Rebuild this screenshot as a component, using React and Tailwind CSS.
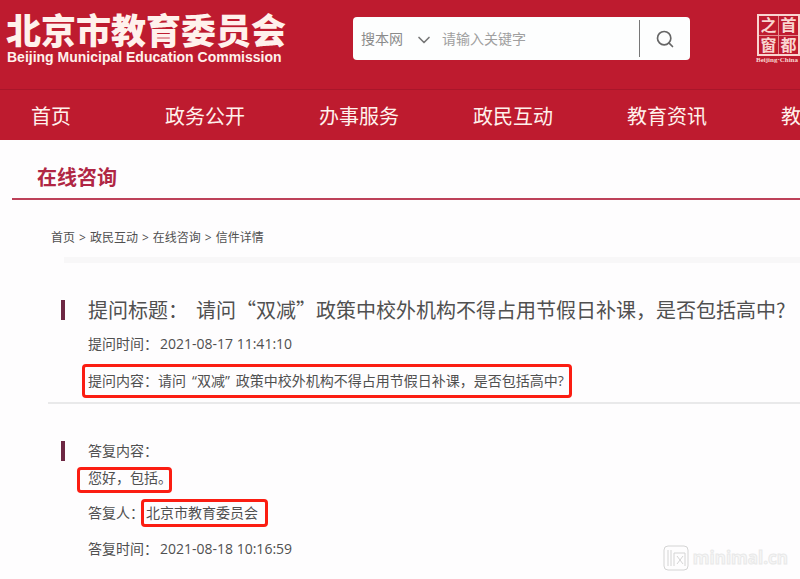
import React from "react";
import { ChevronDown, Search } from "lucide-react";

const NAV = ["政务公开", "办事服务", "政民互动", "教育资讯", "教育服务"];
const CRUMBS = ["首页", "政民互动", "在线咨询", "信件详情"];

function Seal() {
  return (
    <div className="flex w-[48px] shrink-0 flex-col items-start text-[#f9d5d0]">
      <div className="ml-px grid h-[42px] w-[43px] grid-cols-2 grid-rows-2 gap-px border-2 border-current bg-[#e58a8c] text-center text-[16px] leading-[18px] font-bold">
        {["之", "首", "窗", "都"].map((c) => (
          <span key={c} className="bg-[#be1b2f]">{c}</span>
        ))}
      </div>
      <span className="font-['Liberation_Serif',serif] text-[7px] leading-2 font-bold whitespace-nowrap">
        Beijing·China
      </span>
    </div>
  );
}

function Header() {
  return (
    <header className="bg-[#be1b2f] text-[#fff1ec]">
      <div className="flex h-[89px] items-start overflow-hidden pt-[13px]">
        <div className="w-[346px] shrink-0 pl-[6px] whitespace-nowrap">
          <div className="text-[35px] leading-9 font-black">北京市教育委员会</div>
          <div className="pl-px font-['Liberation_Sans',sans-serif] text-[14px] leading-4 font-bold">
            Beijing Municipal Education Commission
          </div>
        </div>
        <form
          className="mt-1 ml-[7px] flex h-[43px] w-[337px] shrink-0 items-center rounded bg-[#fdfefe] text-[14px] text-[#8b8b8b]"
          onSubmit={(e) => e.preventDefault()}
        >
          <div className="relative w-[81px]">
            <select aria-label="搜索范围" className="w-full appearance-none bg-transparent pl-2 outline-none">
              <option>搜本网</option>
            </select>
            <ChevronDown className="pointer-events-none absolute top-0.5 right-0 h-5 w-5 text-[#777]" />
          </div>
          <input
            aria-label="关键字"
            placeholder="请输入关键字"
            className="min-w-0 flex-1 bg-transparent pl-2 outline-none placeholder:text-[#a0a0a0]"
          />
          <button type="submit" aria-label="搜索" className="flex h-[37px] w-[51px] items-center justify-center border-l border-[#777] text-[#666]">
            <Search className="h-5 w-5" />
          </button>
        </form>
        <div className="mt-px ml-[66px]">
          <Seal />
        </div>
      </div>
      <nav className="flex h-[51px] items-center overflow-hidden border-t border-[#a9162a] pt-1 pl-[31px] text-[20px] whitespace-nowrap">
        <a href="#" className="w-[134px] shrink-0">首页</a>
        {NAV.map((item) => (
          <a key={item} href="#" className="w-[154px] shrink-0">{item}</a>
        ))}
      </nav>
    </header>
  );
}

export default function App() {
  return (
    <div className="relative min-h-screen overflow-hidden bg-[#fefdfe] font-['Open_Sans','Noto_Sans_CJK_SC',sans-serif] text-[#505050]">
      <Header />
      <main>
        <h1 className="ml-3 border-b-2 border-[#bd4159] pt-[23px] pb-[5px] pl-[25px] text-[20px] leading-[30px] font-bold text-[#b02644]">
          在线咨询
        </h1>

        <nav className="flex gap-1 pt-[28px] pl-[51px] text-[12px] leading-5 whitespace-nowrap">
          {CRUMBS.map((c, i) => (
            <React.Fragment key={c}>
              {i > 0 && <span>&gt;</span>}
              <a href="#">{c}</a>
            </React.Fragment>
          ))}
        </nav>
        <div className="mt-[9px] ml-16 h-[6px] bg-[#f8f7f8]" />

        <section className="ml-12 border-b-2 border-[#e9e9ea] pt-[32px] pb-1 pl-[13px]">
          <h2 className="flex items-center gap-[23px] text-[20px] leading-[30px] whitespace-nowrap">
            <span className="h-5 w-1 bg-[#6d2743]" />
            <span className="flex gap-2 font-['Noto_Sans_CJK_SC',sans-serif]">
              <span>提问标题：</span>
              <span>请问“双减”政策中校外机构不得占用节假日补课，是否包括高中?</span>
            </span>
          </h2>
          <div className="pl-[27px] text-[14px] whitespace-nowrap">
            <p className="flex gap-[2px] pt-[9px] leading-5">
              <span>提问时间：</span>
              <time>2021-08-17 11:41:10</time>
            </p>
            <p className="-ml-[6px] mt-[10px] flex h-[34px] w-[490px] items-center rounded border-3 border-[#fb1d12] pl-[3px] leading-5">
              <span>提问内容：</span>
              <span>请问</span>
              <span className="mx-[6px]">“双减”</span>
              <span>政策中校外机构不得占用节假日补课，是否包括高中?</span>
            </p>
          </div>
        </section>

        <section className="ml-12 pt-[37px] pb-5 pl-[13px] text-[14px] leading-5 whitespace-nowrap">
          <h3 className="flex items-center gap-[23px]">
            <span className="h-5 w-1 bg-[#6d2743]" />
            答复内容：
          </h3>
          <div className="flex flex-col items-start pl-[27px]">
            <p className="-ml-[11px] mt-[6px] flex h-[26px] w-[95px] items-center rounded border-3 border-[#fb1d12] pb-1 pl-2">
              您好，包括。
            </p>
            <p className="mt-[6px] flex items-center">
              <span className="w-[53px]">答复人：</span>
              <span className="flex h-7 w-[127px] items-center rounded border-3 border-[#fb1d12] pl-[2px]">
                北京市教育委员会
              </span>
            </p>
            <p className="mt-[12px] flex gap-[2px]">
              <span>答复时间：</span>
              <time>2021-08-18 10:16:59</time>
            </p>
          </div>
        </section>
      </main>
      <div className="pointer-events-none absolute right-3 bottom-2 flex items-center gap-1 text-[#f7f7f7]">
        <svg viewBox="0 0 26 26" className="h-[26px] w-[26px]" fill="none" stroke="#d4d4d4" strokeWidth="1">
          <rect x="1" y="1" width="24" height="24" rx="4" />
          <path d="M5 5v16M8 5v16M11 8v13M11 8h11v13M14 11l6 8M20 11l-6 8" />
        </svg>
        <span className="text-[17px] leading-[26px] font-bold [-webkit-text-stroke:1px_#e9e9e9]">minimal.cn</span>
      </div>
    </div>
  );
}
